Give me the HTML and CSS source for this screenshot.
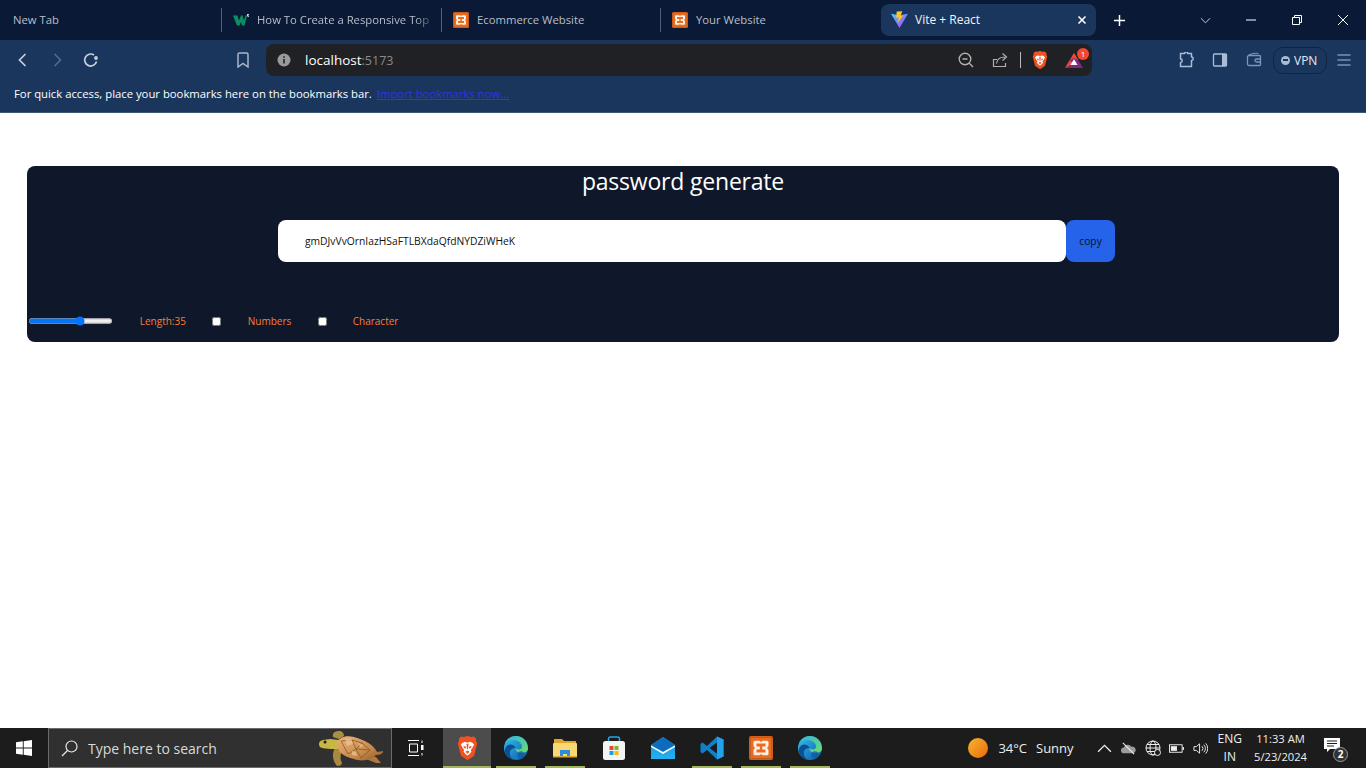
FILE: index.html
```html
<!DOCTYPE html>
<html lang="en">
<head>
<meta charset="utf-8">
<title>Vite + React</title>
<link rel="stylesheet" href="styles.css">
</head>
<body>
<svg class="defs" aria-hidden="true">
  <defs>
    <linearGradient id="sun" x1="0" y1="0" x2="1" y2="1"><stop offset="0" stop-color="#f7b52c"/><stop offset="1" stop-color="#ea6a10"/></linearGradient>
    <linearGradient id="edgeA" x1="0" y1="0" x2="1" y2="1"><stop offset="0" stop-color="#35c1f1"/><stop offset="1" stop-color="#0c59a4"/></linearGradient>
    <linearGradient id="edgeB" x1="0" y1="0" x2="1" y2="1"><stop offset="0" stop-color="#2fb6e0"/><stop offset="1" stop-color="#6fdc6a"/></linearGradient>
    <linearGradient id="mail" x1="0" y1="0" x2="0" y2="1"><stop offset="0" stop-color="#1a8fe0"/><stop offset="1" stop-color="#22b2ef"/></linearGradient>
    <linearGradient id="shell" x1="0" y1="0" x2="1" y2="1"><stop offset="0" stop-color="#e9b47a"/><stop offset=".6" stop-color="#c98a4c"/><stop offset="1" stop-color="#8f5527"/></linearGradient>
    <linearGradient id="vite" x1="0" y1="0" x2="1" y2="1"><stop offset="0" stop-color="#41d1ff"/><stop offset="1" stop-color="#bd34fe"/></linearGradient>
    <symbol id="xampp" viewBox="0 0 16 16">
      <rect width="16" height="16" rx="1.500" fill="#ea6c1e"/>
      <rect x="0.7" y="0.7" width="14.600" height="14.600" rx="1" fill="none" stroke="#b9531a" stroke-width=".8"/>
      <path d="M4 3.200h2.600A1.400 1.400 0 0 1 8 4.400a1.400 1.400 0 0 1 1.400-1.200H12a1 1 0 0 1 1 1v2a1.800 1.800 0 0 1-1.200 1.800A1.800 1.800 0 0 1 13 9.800v2a1 1 0 0 1-1 1H9.400A1.400 1.400 0 0 1 8 11.600a1.400 1.400 0 0 1-1.400 1.200H4a1 1 0 0 1-1-1v-2A1.800 1.800 0 0 1 4.200 8 1.800 1.800 0 0 1 3 6.200v-2a1 1 0 0 1 1-1z" fill="#fdf0e6"/>
      <path d="M5 5h6v2H8.800v2H11v2H5V9h2.200V7H5z" fill="#ea6c1e"/>
    </symbol>
    <symbol id="brave" viewBox="0 0 20 23">
      <path d="M10 0l3.600.9 2.600-.4 2.300 2.600-.5 1.300 1.300 2.600-3 12-4.800 3.300L10 23l-1.500-.7-4.800-3.300-3-12L2 4.400l-.5-1.300L3.800.5l2.600.4z" fill="#f1521f"/>
      <path d="M10 6.500l2.200-.9 2.500.8 1.700 1.800-1.700 3-1.500 2.200.6 1.500-1.800 2.400-2 1.300-2-1.300-1.800-2.400.6-1.500-1.500-2.200-1.700-3 1.700-1.800 2.500-.8z" fill="#fff"/>
      <path d="M6 9.500l2.600.9-.4 1.600-1.500-.4zM14 9.500l-2.600.9.400 1.600 1.500-.4zM9 7.500h2l-.5 5h-1zM8 15l2-1 2 1-2 2z" fill="#f1521f"/>
    </symbol>
    <symbol id="edge" viewBox="0 0 24 24">
      <circle cx="12" cy="12" r="12" fill="url(#edgeA)"/>
      <path d="M24 12.500C24 5.500 18.500 0 12 0 7 0 2.800 3 1 7.500 3 5 6 4 9 4c5.500 0 9 3 9 6.500 0 1.800-1.300 3-3 3-1.800 0-3-.8-3.500-1.500-.4 2.500 2 5 6 5 3.500 0 6.500-1.700 6.500-4.500z" fill="url(#edgeB)"/>
      <path d="M11.500 12c-1-3-4.500-4.500-7.500-3C1.800 10.200.5 13 1 16c1 3.500 4 7 9 7.800-3-1.500-4.500-4.500-4.200-7.300.2-2.500 2.700-4.500 5.700-4.500z" fill="#0b4f94"/>
      <circle cx="17" cy="18.800" r="3.600" fill="#0d5aa8" opacity=".75"/>
    </symbol>
  </defs>
</svg>

<header class="browser">
  <div class="tabstrip">
    <div class="tab tab-first"><span class="tab-title">New Tab</span></div>
    <div class="tab">
      <svg class="favicon" viewBox="0 0 16 12"><path d="M0 1.500h4.500L6 6.500l2-5h1.500l1.500 5 1.500-5h1.500L11.500 11.500H9L8 8l-1.500 3.500H4z" fill="#0a8f64"/><path d="M14 0h2v1h-1v.5h1v1.500h-2v-.5h1.300v-.5H14z" fill="#cfd6df"/></svg>
      <span class="tab-title fade">How To Create a Responsive Top</span>
    </div>
    <div class="tab tab-mid">
      <svg class="favicon"><use href="#xampp"/></svg>
      <span class="tab-title">Ecommerce Website</span>
    </div>
    <div class="tab tab-last">
      <svg class="favicon"><use href="#xampp"/></svg>
      <span class="tab-title">Your Website</span>
    </div>
    <div class="tab-active">
      <svg class="favicon vite-icon" viewBox="0 0 18 18">
        <path d="M0 2.500l9 1.600 9-1.600L9 17.500z" fill="url(#vite)"/>
        <path d="M6 0l6-.3-2 5 3-.6-6 8.400 1.500-6.300-3 .6z" fill="#ffc61f"/>
      </svg>
      <span class="tab-title-active">Vite + React</span>
      <svg class="tab-close" viewBox="0 0 10 10"><path d="M1.500 1.500l7 7M8.500 1.500l-7 7" stroke="#fff" stroke-width="1.600"/></svg>
    </div>
    <svg class="new-tab" viewBox="0 0 14 14"><path d="M7 1v12M1 7h12" stroke="#fff" stroke-width="1.600"/></svg>
    <div class="window-controls">
      <svg class="win-btn win-chevron" viewBox="0 0 12 12"><path d="M1 3.500l5 5 5-5" fill="none" stroke="#d5dae2" stroke-width="1"/></svg>
      <svg class="win-btn" viewBox="0 0 12 12"><path d="M1 6h10" stroke="#fff" stroke-width="1"/></svg>
      <svg class="win-btn" viewBox="0 0 12 12"><path d="M1.500 3.500h7v7h-7zM3.500 3.500v-2h7v7h-2" fill="none" stroke="#fff" stroke-width="1"/></svg>
      <svg class="win-btn" viewBox="0 0 12 12"><path d="M1 1l10 10M11 1L1 11" stroke="#fff" stroke-width="1"/></svg>
    </div>
  </div>

  <div class="toolbar">
    <button class="tool"><svg viewBox="0 0 16 16" class="ico"><path d="M10.500 2L4.500 8l6 6" fill="none" stroke="#c7d0dd" stroke-width="1.700"/></svg></button>
    <button class="tool"><svg viewBox="0 0 16 16" class="ico"><path d="M5.500 2l6 6-6 6" fill="none" stroke="#55698a" stroke-width="1.700"/></svg></button>
    <button class="tool"><svg viewBox="0 0 16 16" class="ico"><path d="M13.500 9.500A6 6 0 1 1 11 3" fill="none" stroke="#c7d0dd" stroke-width="1.700"/><circle cx="13" cy="6" r="1.900" fill="#c7d0dd"/></svg></button>
    <button class="tool tool-bookmark"><svg viewBox="0 0 16 16" class="ico"><path d="M3 2.500a1.500 1.500 0 0 1 1.500-1.500h7A1.500 1.500 0 0 1 13 2.500V15l-5-3.500L3 15z" fill="none" stroke="#aab6c8" stroke-width="1.500"/></svg></button>
    <div class="urlbar">
      <svg class="info" viewBox="0 0 14 14"><circle cx="7" cy="7" r="6.500" fill="#9a9a9a"/><path d="M6.200 6h1.600v4.500H6.200zM6.200 3.200h1.600v1.600H6.200z" fill="#222"/></svg>
      <span class="host">localhost</span><span class="port">:5173</span>
      <div class="url-actions">
        <svg class="url-ico" viewBox="0 0 16 16"><circle cx="7" cy="7" r="5.800" fill="none" stroke="#b0b0b0" stroke-width="1.400"/><path d="M4.500 7h5M11.300 11.300L15 15" stroke="#b0b0b0" stroke-width="1.400"/></svg>
        <svg class="url-ico url-share" viewBox="0 0 16 16"><path d="M5 7.500H1.500v7h12V11" fill="none" stroke="#b0b0b0" stroke-width="1.200"/><path d="M4.500 11.500C5 7 8 5 13 5M10.500 1.500L14.500 5l-4 3.500" fill="none" stroke="#b0b0b0" stroke-width="1.200"/></svg>
        <span class="url-sep"></span>
        <svg class="brave-small"><use href="#brave"/></svg>
        <div class="bat">
          <svg class="bat-ico" viewBox="0 0 18 15"><path d="M9 0l9 15H0z" fill="#7a2a83"/><path d="M9 0l4.500 7.500L9 5 4.500 7.500z" fill="#f0492f"/><path d="M0 15l4.500-7.500L9 10zM18 15l-4.500-7.500" fill="#f0492f"/><path d="M9 6l3.500 6h-7z" fill="#fff"/></svg>
          <span class="badge">1</span>
        </div>
      </div>
    </div>
    <button class="tool tool-ext"><svg viewBox="0 0 16 16" class="ico"><path d="M2.500 1.500h4.200a1.500 1.500 0 0 1 3 0h3.800V5a1.700 1.700 0 0 1 0 3.400v6.100H2.500v-4a1.700 1.700 0 0 0 0-3.400z" fill="none" stroke="#a9bcd6" stroke-width="1.500" stroke-linejoin="round"/></svg></button>
    <button class="tool"><svg viewBox="0 0 16 16" class="ico"><rect x="1.500" y="2" width="13" height="12" rx="1" fill="none" stroke="#a9bcd6" stroke-width="1.300"/><rect x="10" y="2" width="4.500" height="12" fill="#a9bcd6"/></svg></button>
    <button class="tool"><svg viewBox="0 0 16 16" class="ico"><path d="M13.500 3.500H3a1.500 1.500 0 0 0-1.500 1.500v7A1.500 1.500 0 0 0 3 13.500h10.500a1 1 0 0 0 1-1v-8a1 1 0 0 0-1-1zM14.500 7h-4a1.500 1.500 0 0 0 0 3h4" fill="none" stroke="#7f95b4" stroke-width="1.300"/><path d="M2.500 3.500c2-2 8-2.500 10-2" fill="none" stroke="#7f95b4" stroke-width="1.100"/></svg></button>
    <div class="vpn"><span class="vpn-dot"></span><span class="vpn-label">VPN</span></div>
    <button class="tool"><svg viewBox="0 0 16 16" class="ico"><path d="M1.500 3h13M1.500 8h13M1.500 13h13" stroke="#a9bcd6" stroke-width="1.200"/></svg></button>
  </div>

  <div class="bookmarks">
    <span class="bm-text">For quick access, place your bookmarks here on the bookmarks bar.</span>
    <a class="import" href="#">Import bookmarks now...</a>
  </div>
</header>

<main class="page">
  <section class="card">
    <h1 class="title">password generate</h1>
    <div class="pass-row">
      <input class="pass-input" type="text" readonly value="gmDJvVvOrnIazHSaFTLBXdaQfdNYDZiWHeK">
      <button class="copy">copy</button>
    </div>
    <div class="options">
      <input class="slider" type="range" min="6" max="52" value="35">
      <label class="opt opt-length">Length:35</label>
      <input class="check" type="checkbox">
      <label class="opt opt-numbers">Numbers</label>
      <input class="check" type="checkbox">
      <label class="opt opt-char">Character</label>
    </div>
  </section>
</main>

<footer class="taskbar">
  <div class="start">
    <svg class="win-logo" viewBox="0 0 16 16"><path d="M0 2.300l6.800-1v6.200H0zM7.700 1.200L16 0v7.500H7.700zM0 8.400h6.800v6.300l-6.800-1zM7.700 8.400H16V16l-8.300-1.200z" fill="#fff"/></svg>
  </div>
  <div class="search">
    <svg class="search-ico" viewBox="0 0 17 17"><circle cx="10.500" cy="6.500" r="5.500" fill="none" stroke="#e8e8e8" stroke-width="1.200"/><path d="M6.500 10.500L1 16" stroke="#e8e8e8" stroke-width="1.300"/></svg>
    <span class="search-text">Type here to search</span>
    <svg class="turtle" viewBox="0 0 66 38">
      <path d="M17 19c-3 5-3 12 2 18 3 0 5-1 5-3-2-4-2-7 0-12z" fill="#a88a3e"/>
      <path d="M50 27l8 1 5 6-5 0-10-4z" fill="#b07a3e"/>
      <path d="M15 8c-1-4 2-6 6-6 3 0 5 2 5 5l-5 3z" fill="#a8913e"/>
      <path d="M20 20C14 20 5 20 2 18c-2-3-1-6 3-7l7-1 9 1z" fill="#c8b645"/>
      <circle cx="7" cy="13" r="1.500" fill="#1c1c10"/>
      <path d="M19 14c2-6 9-8 17-6 11 3 20 8 23 15l6-1c0 3-3 4-7 4-4 5-14 7-22 4C26 28 18 22 19 14z" fill="url(#shell)"/>
      <path d="M23 12l11-1 4 9-8 5zM34 11l10 3-6 6M44 14l8 7-14-1M38 20l5 9M52 21l-9 8" fill="none" stroke="#8a5a2c" stroke-width=".8"/>
      <path d="M27 10l6-1 2 6-6 2zM40 14l5 2-2 3zM34 22l4 1 1 4-5-1z" fill="#efc592" opacity=".7"/>
    </svg>
  </div>
  <div class="taskview">
    <svg class="tv-ico" viewBox="0 0 16 16"><path d="M0 .5h11M0 15.500h11M1.500 4h8v8h-8z" fill="none" stroke="#fff" stroke-width="1"/><path d="M14 .5v2.500M14 13v2.500" stroke="#fff" stroke-width="1"/><rect x="13" y="5" width="2.500" height="5" fill="#fff"/></svg>
  </div>
  <div class="apps">
    <div class="app app-active"><svg class="app-ico brave-big"><use href="#brave"/></svg><span class="run run-full"></span></div>
    <div class="app"><svg class="app-ico"><use href="#edge"/></svg><span class="run"></span></div>
    <div class="app">
      <svg class="app-ico" viewBox="0 0 24 20"><path d="M1 1h8l2 2h12v3H1z" fill="#e1a528"/><path d="M1 5h22a1 1 0 0 1 1 1v13H0V6a1 1 0 0 1 1-1z" fill="#f8d775"/><path d="M7 12h10v7h-3v-3h-4v3H7z" fill="#2b8ddb"/><path d="M0 18h24v1.500H0z" fill="#d9a73a"/></svg>
      <span class="run"></span>
    </div>
    <div class="app">
      <svg class="app-ico" viewBox="0 0 24 24"><path d="M6.500 6V3a2 2 0 0 1 2-2h7a2 2 0 0 1 2 2v3" fill="none" stroke="#26a5e4" stroke-width="1.500"/><rect x="1" y="5" width="22" height="19" rx="2.500" fill="#f4f4f4"/><path d="M7.500 10h4v4h-4z" fill="#e8492c"/><path d="M12.500 10h4v4h-4z" fill="#7ab829"/><path d="M7.500 15h4v4h-4z" fill="#12a3ea"/><path d="M12.500 15h4v4h-4z" fill="#fab900"/></svg>
      <span class="run run-none"></span>
    </div>
    <div class="app">
      <svg class="app-ico" viewBox="0 0 24 22"><path d="M12 0l12 8v14H0V8z" fill="url(#mail)"/><path d="M12 0l12 8-12 7L0 8z" fill="#0f6cbd"/><path d="M0 8.500l12 6.500 12-6.500V10l-12 7L0 10z" fill="#fff"/></svg>
      <span class="run run-none"></span>
    </div>
    <div class="app">
      <svg class="app-ico" viewBox="0 0 24 24"><path d="M17 .5l6.500 3v17L17 23.500 7 14l-4.500 3.500L.5 16V8l2-1.500L7 10z" fill="#0e7fc9"/><path d="M17 6.500L9.500 12l7.500 5.500z" fill="#1c1c1c"/><path d="M17 .5l6.500 3v17L17 23.500z" fill="#22a2ea"/></svg>
      <span class="run"></span>
    </div>
    <div class="app"><svg class="app-ico"><use href="#xampp"/></svg><span class="run"></span></div>
    <div class="app"><svg class="app-ico"><use href="#edge"/></svg><span class="run"></span></div>
  </div>
  <div class="tray">
    <svg class="sun" viewBox="0 0 20 20"><circle cx="10" cy="10" r="10" fill="url(#sun)"/></svg>
    <span class="weather">34°C</span><span class="weather weather-word">Sunny</span>
    <svg class="tray-ico tray-up" viewBox="0 0 14 14"><path d="M1 10l6-6 6 6" fill="none" stroke="#eee" stroke-width="1.200"/></svg>
    <svg class="tray-ico" viewBox="0 0 16 14"><path d="M3 12a3 3 0 0 1 0-6 4.500 4.500 0 0 1 8-1 3.500 3.500 0 0 1 2 7z" fill="#9c9c9c"/><path d="M2 1l12 12" stroke="#eee" stroke-width="1.200"/></svg>
    <svg class="tray-ico tray-globe" viewBox="0 0 16 16"><circle cx="8" cy="8" r="7" fill="none" stroke="#eee" stroke-width="1"/><ellipse cx="8" cy="8" rx="3" ry="7" fill="none" stroke="#eee"/><path d="M1 8h14M2 4.500h12M2 11.500h12" stroke="#eee"/><circle cx="12.500" cy="12.500" r="3" fill="#1c1c1c" stroke="#eee"/></svg>
    <svg class="tray-ico" viewBox="0 0 16 14"><rect x=".5" y="3" width="13.500" height="8" fill="none" stroke="#eee"/><rect x="2" y="4.500" width="6.500" height="5" fill="#eee"/><rect x="14.500" y="5.500" width="1.500" height="3" fill="#eee"/></svg>
    <svg class="tray-ico" viewBox="0 0 16 14"><path d="M1 5h2.500L7 2v10L3.500 9H1z" fill="none" stroke="#eee"/><path d="M9.500 4.500a3.500 3.500 0 0 1 0 5M11.500 3a6 6 0 0 1 0 8M13.500 1.500a8 8 0 0 1 0 11" fill="none" stroke="#eee"/></svg>
    <div class="lang"><span>ENG</span><span>IN</span></div>
    <div class="clock"><span>11:33 AM</span><span>5/23/2024</span></div>
    <div class="notify">
      <svg class="note-ico" viewBox="0 0 16 16"><path d="M0 0h16v11H6l-3 3v-3H0z" fill="#fff"/><path d="M3 3h10M3 5.500h10M3 8h7" stroke="#1c1c1c"/></svg>
      <span class="note-count">2</span>
    </div>
  </div>
</footer>
</body>
</html>
```

FILE: styles.css
```css
* { box-sizing: border-box; }

html, body {
  margin: 0;
  height: 100%;
  overflow: hidden;
}

body {
  display: flex;
  flex-direction: column;
  width: 1366px;
  height: 768px;
  background: #fff;
  font-family: "Open Sans", "Noto Sans", sans-serif;
}

.defs {
  display: block;
  width: 0;
  height: 0;
}

svg { display: block; flex: none; }

/* browser chrome */
.browser {
  flex: none;
  height: 113px;
  background: #1a365d;
  border-bottom: 1px solid #3c5575;
}

.tabstrip {
  display: flex;
  align-items: center;
  height: 40px;
  background: #0a1a36;
}

.tab {
  display: flex;
  align-items: center;
  gap: 8px;
  width: 220px;
  height: 24px;
  padding-left: 11px;
  border-left: 1px solid #50607a;
  overflow: hidden;
}

.tab-first { width: 221px; padding-left: 13px; border-left: 0; }
.tab-mid { width: 219px; }
.tab-last { width: 221px; }

.favicon { width: 16px; height: 16px; }

.tab-title {
  margin-bottom: 2px;
  font-size: 11.300px;
  color: #b7bec9;
  white-space: nowrap;
}

.fade {
  width: 172px;
  -webkit-mask-image: linear-gradient(90deg, #000 92%, rgba(0, 0, 0, .35));
  mask-image: linear-gradient(90deg, #000 92%, rgba(0, 0, 0, .35));
}

.tab-active {
  display: flex;
  align-items: center;
  width: 215px;
  height: 32px;
  padding-left: 10px;
  background: #1a365d;
  border-radius: 8px;
}

.vite-icon { width: 17px; height: 18px; }

.tab-title-active {
  margin-left: 7px;
  margin-bottom: 2px;
  font-size: 12px;
  color: #f2f4f7;
}

.tab-close {
  width: 10px;
  height: 10px;
  margin-left: auto;
  margin-right: 9px;
}

.new-tab {
  width: 13px;
  height: 13px;
  margin-left: 17px;
}

.window-controls {
  display: flex;
  align-items: center;
  gap: 34px;
  margin-left: 74px;
}

.win-btn { width: 12px; height: 12px; }
.win-chevron { width: 11px; height: 11px; }

.toolbar {
  display: flex;
  align-items: center;
  height: 36px;
  padding-left: 6px;
  padding-top: 4px;
}

.tool {
  display: flex;
  align-items: center;
  justify-content: center;
  flex: none;
  width: 34px;
  height: 32px;
  padding: 0;
  border: 0;
  background: transparent;
}

.ico { width: 16px; height: 16px; }

.tool-bookmark { margin-left: 118px; }
.tool-ext { margin-left: 77px; }

.urlbar {
  display: flex;
  align-items: center;
  width: 826px;
  height: 32px;
  margin-left: 6px;
  padding-left: 11px;
  background: #202124;
  border-radius: 8px;
}

.info { width: 14px; height: 14px; margin-right: 14px; }

.host { font-size: 13.500px; color: #fff; }
.port { font-size: 12.500px; color: #8b8b8b; }

.url-actions {
  display: flex;
  align-items: center;
  margin-left: auto;
}

.url-ico { width: 16px; height: 16px; }
.url-share { margin-left: 18px; }

.url-sep {
  width: 1px;
  height: 16px;
  margin: 0 11px 0 12px;
  background: #bbb;
}

.brave-small { width: 16px; height: 18px; }

.bat {
  position: relative;
  width: 18px;
  height: 15px;
  margin-left: 17px;
  margin-right: 9px;
}

.bat-ico { width: 18px; height: 15px; }

.badge {
  position: absolute;
  top: -5px;
  right: -6px;
  width: 12px;
  height: 12px;
  border-radius: 50%;
  background: #f0492f;
  color: #fff;
  font-size: 8px;
  line-height: 12px;
  text-align: center;
}

.vpn {
  display: flex;
  align-items: center;
  gap: 4px;
  width: 54px;
  height: 27px;
  margin-left: 2px;
  padding-left: 7px;
  border: 1px solid #10243f;
  border-radius: 10px;
}

.vpn-dot {
  flex: none;
  display: flex;
  align-items: center;
  justify-content: center;
  width: 9px;
  height: 9px;
  border-radius: 50%;
  background: #a9bcd6;
}

.vpn-dot::after {
  content: "";
  width: 5px;
  height: 1.500px;
  background: #1a365d;
}

.vpn-label { font-size: 12px; color: #e4eaf2; }

.bookmarks {
  display: flex;
  align-items: center;
  gap: 5px;
  height: 36px;
  padding-left: 14px;
  padding-bottom: 2px;
  font-size: 11.300px;
  color: #fff;
}

.import {
  color: #3333e0;
  text-decoration: underline;
}

/* page */
.page {
  flex: 1;
  padding: 53px 27px 0;
  background: #fff;
}

.card {
  display: flex;
  flex-direction: column;
  height: 176px;
  background: #0f172a;
  border-radius: 8px;
}

.title {
  margin: 0;
  height: 30px;
  font-size: 23px;
  font-weight: 400;
  letter-spacing: -.2px;
  line-height: 30px;
  text-align: center;
  color: #fff;
}

.pass-row {
  display: flex;
  justify-content: center;
  margin-top: 24px;
  padding-left: 27px;
}

.pass-input {
  width: 788px;
  height: 42px;
  padding: 0 27px;
  border: 0;
  border-radius: 8px;
  outline: 0;
  background: #fff;
  color: #111;
  font-family: "Open Sans", "Noto Sans", sans-serif;
  font-size: 10.300px;
}

.copy {
  width: 49px;
  height: 42px;
  padding: 0;
  border: 0;
  border-radius: 8px;
  background: #2563eb;
  color: #0b1220;
  font-family: "Open Sans", "Noto Sans", sans-serif;
  font-size: 10.300px;
}

.options {
  display: flex;
  align-items: center;
  height: 16px;
  margin-top: 51px;
}

.slider {
  zoom: .67;
  width: 127px;
  margin: 0 0 0 1px;
  accent-color: #0075ff;
}

.opt {
  margin-bottom: 1px;
  font-size: 10px;
  color: #fb7d35;
  white-space: nowrap;
}

.opt-length { margin-left: 27px; width: 72px; }
.opt-numbers { margin-left: 27px; width: 70px; }
.opt-char { margin-left: 26px; }

.check {
  width: 9px;
  height: 9px;
  margin: 0;
}

/* taskbar */
.taskbar {
  display: flex;
  flex: none;
  height: 40px;
  background: #1c1c1c;
}

.start {
  display: flex;
  align-items: center;
  justify-content: center;
  width: 48px;
}

.win-logo { width: 16px; height: 16px; }

.search {
  display: flex;
  align-items: center;
  width: 344px;
  padding-left: 12px;
  background: #303030;
  border: 1px solid #6b6b6b;
  overflow: hidden;
}

.search-ico { width: 17px; height: 17px; }

.search-text {
  margin-left: 10px;
  font-size: 14px;
  color: #d9d9d9;
}

.turtle {
  width: 66px;
  height: 38px;
  margin-left: auto;
  margin-right: 7px;
}

.taskview {
  display: flex;
  align-items: center;
  justify-content: center;
  width: 48px;
}

.tv-ico { width: 16px; height: 16px; }

.apps {
  display: flex;
  margin-left: 3px;
}

.app {
  display: flex;
  flex-direction: column;
  align-items: center;
  justify-content: space-between;
  width: 49px;
  padding: 8px 1px 0 0;
}

.app-active { background: linear-gradient(90deg, #4c4c4c 48px, transparent 48px); }

.app-ico { width: 24px; height: 24px; }
.brave-big { width: 21px; height: 24px; }

.run {
  width: 40px;
  height: 2px;
  background: #a3b65c;
}

.run-full { width: 48px; align-self: flex-start; }
.run-none { background: transparent; }

.tray {
  display: flex;
  align-items: center;
  margin-left: auto;
  color: #eee;
}

.sun { width: 20px; height: 20px; }

.weather { margin-left: 10px; font-size: 13px; }
.weather-word { margin-left: 9px; }

.tray-ico { width: 15px; height: 15px; margin-left: 9px; }
.tray-up { margin-left: 23px; }
.tray-globe { width: 16px; height: 16px; margin-right: -1px; }

.lang {
  display: flex;
  flex-direction: column;
  align-items: center;
  margin-left: 10px;
  font-size: 12px;
  line-height: 18px;
}

.clock {
  display: flex;
  flex-direction: column;
  align-items: center;
  margin-left: 12px;
  font-size: 11.200px;
  line-height: 18px;
}

.notify {
  position: relative;
  width: 24px;
  height: 24px;
  margin-left: 17px;
  margin-right: 18px;
}

.note-ico { width: 16px; height: 16px; margin-top: 2px; }

.note-count {
  position: absolute;
  right: 0;
  bottom: -2px;
  width: 15px;
  height: 15px;
  border: 1px solid #9a9a9a;
  border-radius: 50%;
  background: #333;
  color: #fff;
  font-size: 10px;
  font-weight: 700;
  line-height: 13px;
  text-align: center;
}
```
